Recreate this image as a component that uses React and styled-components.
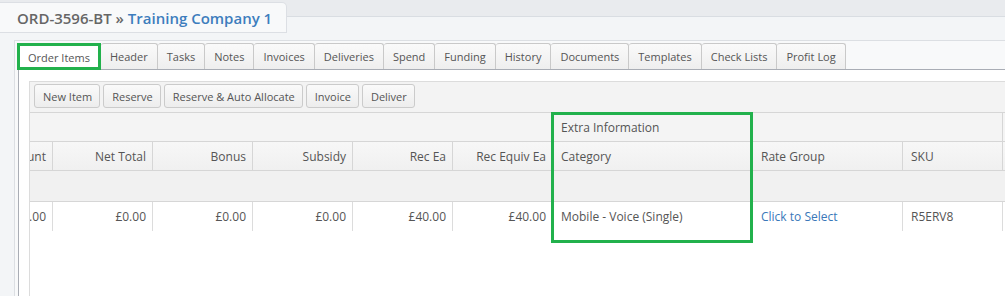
import React, { useLayoutEffect, useRef } from 'react';
import styled, { createGlobalStyle } from 'styled-components';

const GlobalStyle = createGlobalStyle`
  html, body { margin: 0; padding: 0; height: 100%; overflow: hidden; }
  body {
    font-family: "Open Sans", "Liberation Sans", sans-serif;
    font-size: 12px;
    color: #555;
    background: #e9ebee;
  }
  #root { height: 100%; }
`;

const Page = styled.div`
  height: 100%;
  box-sizing: border-box;
  padding-top: 16px;
  display: flex;
  flex-direction: column;
`;

const Panel = styled.div`
  flex: 1;
  min-height: 0;
  display: flex;
  flex-direction: column;
  background: #f3f5f7;
  border-top: 1px solid #d9dde2;
`;

const TitleTab = styled.div`
  align-self: flex-start;
  margin-top: -15px;
  width: 287px;
  height: 31px;
  box-sizing: border-box;
  padding-left: 17px;
  display: flex;
  align-items: center;
  background: #f8f9fa;
  border: 1px solid #dcdfe4;
  border-left: none;
  border-radius: 0 5px 0 0;
  font-size: 15px;
  font-weight: 600;
  color: #666;
  white-space: nowrap;
`;

const TitleLink = styled.span`
  color: #3d7dbd;
`;

const TabsBox = styled.div`
  flex: 1;
  min-height: 0;
  margin: 7px 0 0 14px;
  padding: 2px 0 0 3px;
  border-top: 1px solid #dcdfe3;
  border-left: 1px solid #dcdfe3;
  background: #f8f9fa;
  display: flex;
  flex-direction: column;
`;

const TabStrip = styled.div`
  display: flex;
  align-items: flex-end;
  margin-left: -1px;
  position: relative;
  z-index: 1;
`;

const Tab = styled.div`
  height: ${(p) => (p.$active ? 27 : 26)}px;
  margin-bottom: ${(p) => (p.$active ? -1 : 0)}px;
  box-sizing: border-box;
  padding: 0 ${(p) => (p.$active ? 10 : 9)}px;
  display: flex;
  align-items: center;
  border: 1px solid #c9c9c9;
  border-bottom: none;
  border-radius: ${(p) => (p.$highlight ? '0' : '3px 3px 0 0')};
  background: ${(p) => (p.$active ? '#fff' : 'linear-gradient(#fafafa, #eeeeee)')};
  font-size: 11px;
  color: #555;
  white-space: nowrap;
  outline: ${(p) => (p.$highlight ? '3px solid #22b14c' : 'none')};
  outline-offset: -3px;
  & + & { border-left: none; }
`;

const TabContent = styled.div`
  flex: 1;
  min-height: 0;
  background: #fff;
  border-top: 1px solid #a9adb5;
  border-left: 1px solid #a9adb5;
  padding: 11px 0 0 10px;
  display: flex;
  flex-direction: column;
`;

const GridPanel = styled.div`
  flex: 1;
  min-height: 0;
  background: #fff;
  border-left: 1px solid #dcdcdc;
  display: flex;
  flex-direction: column;
`;

const Toolbar = styled.div`
  display: flex;
  gap: 3px;
  padding: 2px 0 4px 4px;
  background: #f3f3f3;
  border-top: 1px solid #dcdcdc;
`;

const Button = styled.button`
  height: 24px;
  box-sizing: border-box;
  padding: 0 7px 0 8px;
  border: 1px solid #cbcbcb;
  border-radius: 3px;
  background: linear-gradient(#fafafa, #ededed);
  font-family: inherit;
  font-size: 11px;
  color: #555;
  white-space: nowrap;
`;

const Viewport = styled.div`
  flex: 1;
  overflow: hidden;
`;

const GridInner = styled.div`
  position: relative;
  width: max-content;
`;

const Table = styled.table`
  border-collapse: separate;
  border-spacing: 0;
  table-layout: fixed;
`;

const GroupCell = styled.td`
  box-sizing: border-box;
  height: 30px;
  padding: 0 8px;
  background: #f4f4f4;
  border-top: 1px solid #d6d6d6;
  border-bottom: 1px solid #d6d6d6;
  border-right: 1px solid #d6d6d6;
  white-space: nowrap;
  text-align: left;
`;

const HeadCell = styled.th`
  box-sizing: border-box;
  height: 29px;
  width: ${(p) => p.$w}px;
  padding: ${(p) => (p.$right ? '0 6px 0 8px' : '0 8px')};
  text-align: ${(p) => (p.$right ? 'right' : 'left')};
  font-weight: normal;
  background: linear-gradient(#f7f7f7, #f0f0f0);
  border-bottom: 1px solid #d6d6d6;
  border-right: 1px solid #d6d6d6;
  white-space: nowrap;
  overflow: hidden;
`;

const FilterCell = styled.td`
  box-sizing: border-box;
  height: 31px;
  padding: 0;
  background: #f1f1f1;
  border-bottom: 1px solid #d6d6d6;
`;

const DataCell = styled.td`
  box-sizing: border-box;
  height: 29px;
  padding: ${(p) => (p.$right ? '0 6px 0 8px' : '0 8px')};
  text-align: ${(p) => (p.$right ? 'right' : 'left')};
  border-right: 1px solid #dcdcdc;
  white-space: nowrap;
  overflow: hidden;
  color: ${(p) => (p.$link ? '#3a78b9' : '#555')};
`;

const ColumnHighlight = styled.div`
  position: absolute;
  top: 0;
  left: ${(p) => p.$left}px;
  width: ${(p) => p.$width}px;
  height: 131px;
  box-sizing: border-box;
  border: 3px solid #22b14c;
  pointer-events: none;
`;

const tabs = [
  'Order Items', 'Header', 'Tasks', 'Notes', 'Invoices', 'Deliveries', 'Spend',
  'Funding', 'History', 'Documents', 'Templates', 'Check Lists', 'Profit Log',
];

const actions = ['New Item', 'Reserve', 'Reserve & Auto Allocate', 'Invoice', 'Deliver'];

const columns = [
  { key: 'discount', label: 'Discount', w: 100, right: true, value: '£0.00' },
  { key: 'net', label: 'Net Total', w: 100, right: true, value: '£0.00' },
  { key: 'bonus', label: 'Bonus', w: 100, right: true, value: '£0.00' },
  { key: 'subsidy', label: 'Subsidy', w: 100, right: true, value: '£0.00' },
  { key: 'recea', label: 'Rec Ea', w: 100, right: true, value: '£40.00' },
  { key: 'recequiv', label: 'Rec Equiv Ea', w: 100, right: true, value: '£40.00' },
  { key: 'category', label: 'Category', w: 200, value: 'Mobile - Voice (Single)' },
  { key: 'rate', label: 'Rate Group', w: 150, value: 'Click to Select', link: true },
  { key: 'sku', label: 'SKU', w: 100, value: 'R5ERV8' },
  { key: 'supplier', label: 'Supplier', w: 150, value: '' },
];

export default function App() {
  const viewRef = useRef(null);
  useLayoutEffect(() => {
    if (viewRef.current) viewRef.current.scrollLeft = 77;
  }, []);

  return (
    <>
      <GlobalStyle />
      <Page>
        <Panel>
          <TitleTab>
            ORD-3596-BT »&nbsp;<TitleLink>Training Company 1</TitleLink>
          </TitleTab>
          <TabsBox>
            <TabStrip>
              {tabs.map((t, i) => (
                <Tab key={t} $active={i === 0} $highlight={i === 0}>{t}</Tab>
              ))}
            </TabStrip>
            <TabContent>
              <GridPanel>
                <Toolbar>
                  {actions.map((a) => <Button key={a}>{a}</Button>)}
                </Toolbar>
                <Viewport ref={viewRef}>
                  <GridInner>
                    <Table>
                      <thead>
                        <tr>
                          <GroupCell colSpan={6} />
                          <GroupCell>Extra Information</GroupCell>
                          <GroupCell colSpan={2} />
                          <GroupCell />
                        </tr>
                        <tr>
                          {columns.map((c) => (
                            <HeadCell key={c.key} $w={c.w} $right={c.right}>{c.label}</HeadCell>
                          ))}
                        </tr>
                      </thead>
                      <tbody>
                        <tr>
                          {columns.map((c) => <FilterCell key={c.key} />)}
                        </tr>
                        <tr>
                          {columns.map((c) => (
                            <DataCell key={c.key} $right={c.right} $link={c.link}>{c.value}</DataCell>
                          ))}
                        </tr>
                      </tbody>
                    </Table>
                    <ColumnHighlight $left={598} $width={202} />
                  </GridInner>
                </Viewport>
              </GridPanel>
            </TabContent>
          </TabsBox>
        </Panel>
      </Page>
    </>
  );
}
